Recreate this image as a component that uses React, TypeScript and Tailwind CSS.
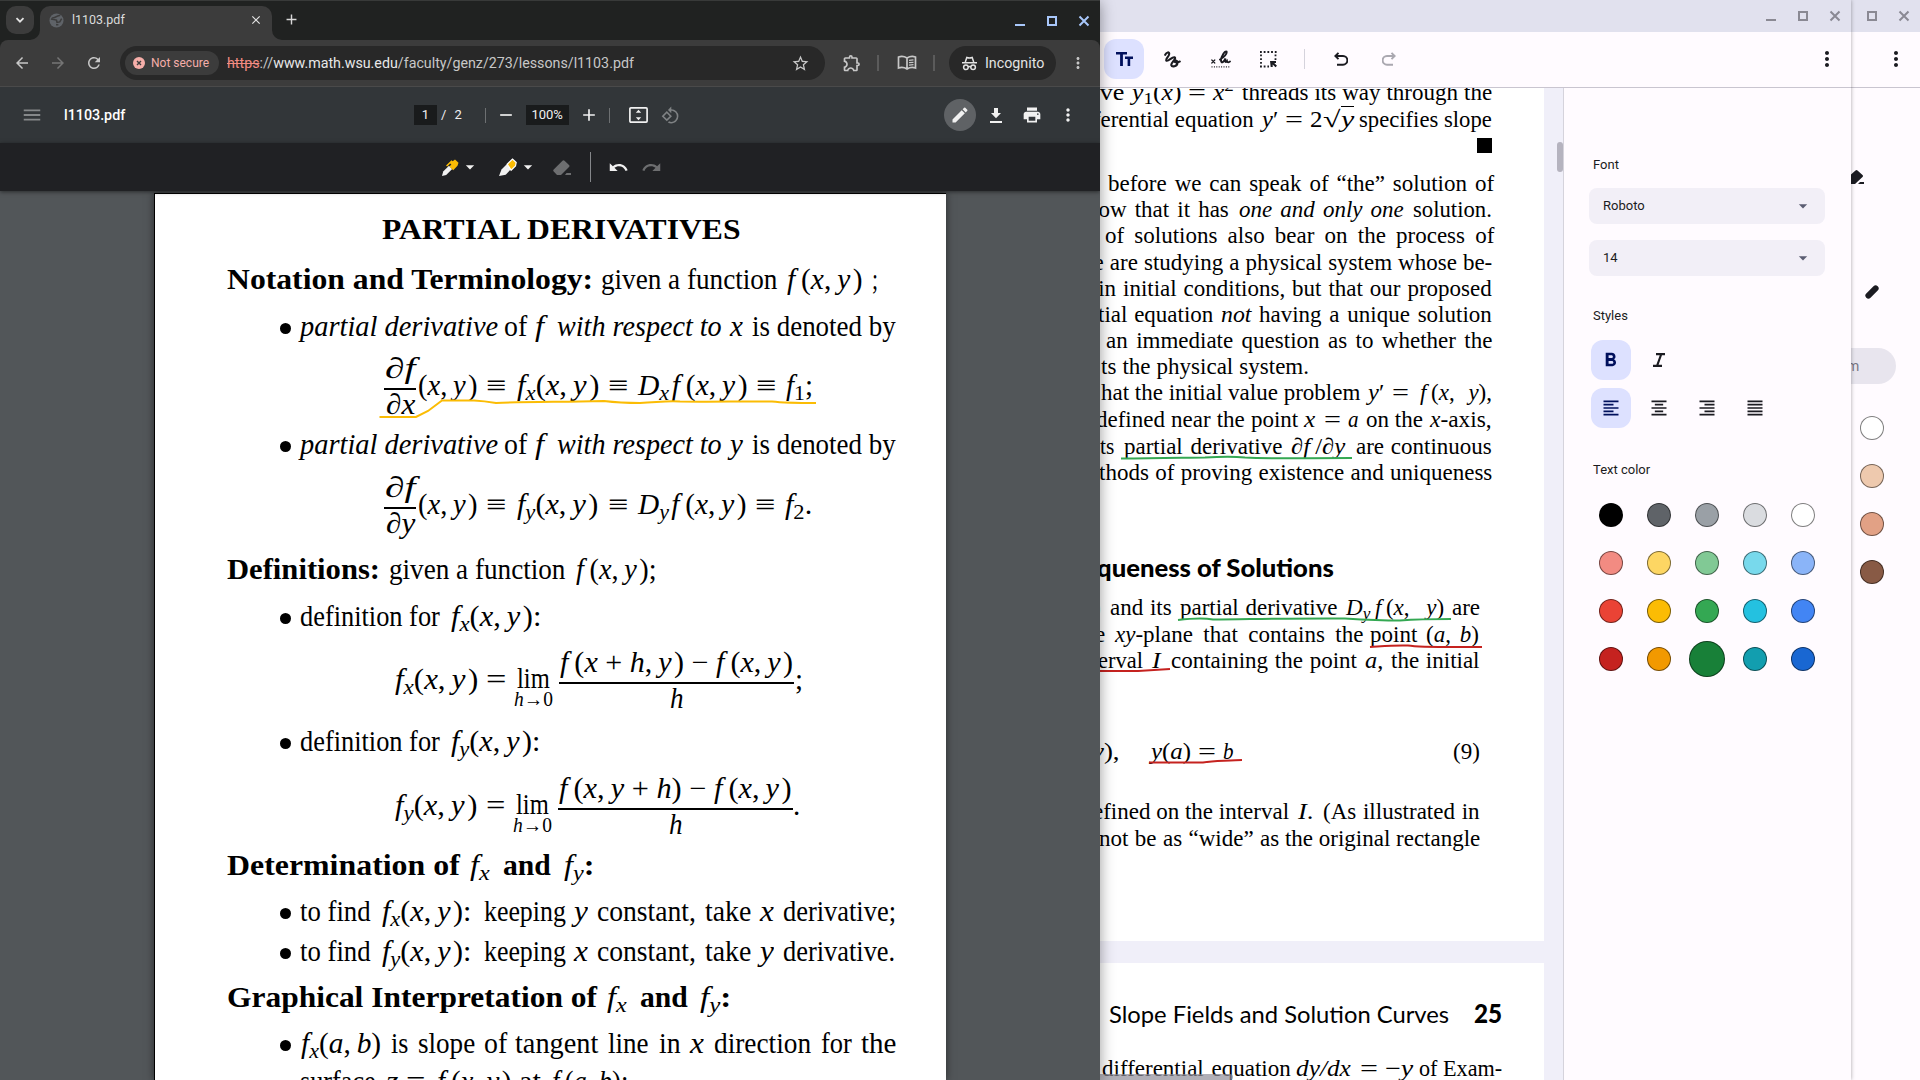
import { useLayoutEffect, useRef, useState, type ReactNode } from 'react';
import {
  MdArrowBack, MdArrowForward, MdRefresh, MdStarOutline, MdOutlineExtension, MdMoreVert, MdEdit, MdPrint,
  MdUndo, MdRedo, MdFormatAlignLeft, MdFormatAlignCenter, MdFormatAlignRight, MdFormatAlignJustify, MdFormatBold,
  MdArrowDropDown, MdAdd, MdRemove, MdClose, MdMenu, MdOutlineRotate90DegreesCcw,
} from 'react-icons/md';

/** Fits a run of text to a target width, either by stretching it or by widening its word spaces. */
function Fit({ w, gap = 0, justify = false, className = '', children }: {
  w: number; gap?: number; justify?: boolean; className?: string; children: ReactNode;
}) {
  const ref = useRef<HTMLSpanElement>(null);
  const [fit, setFit] = useState<{ transform?: string; wordSpacing?: string }>({});
  useLayoutEffect(() => {
    const el = ref.current;
    if (!el) return;
    const natural = el.offsetWidth;
    const spaces = (el.textContent ?? '').split(' ').length - 1;
    if (justify && spaces > 0 && natural < w) setFit({ wordSpacing: `${(w - natural) / spaces}px` });
    else if (natural > 0) setFit({ transform: `scaleX(${w / natural})` });
  }, [w, justify]);
  return (
    <span className={`block shrink-0 ${className}`} style={{ width: w, marginLeft: gap }}>
      <span ref={ref} className="inline-block origin-left whitespace-nowrap" style={fit}>{children}</span>
    </span>
  );
}

type Seg = [start: number, end: number, node: ReactNode, className?: string];

/** One typeset line: runs placed between start and end stops, measured from `from`. */
function Line({ h, segs, from, justify = false, className = '' }: {
  h: string; segs: Seg[]; from: number; justify?: boolean; className?: string;
}) {
  let pos = from;
  return (
    <div className={`flex items-end ${h} ${className}`}>
      {segs.map(([a, b, node, cls], i) => {
        const gap = a - pos;
        pos = b;
        return <Fit key={i} w={b - a} gap={gap} justify={justify} className={cls}>{node}</Fit>;
      })}
    </div>
  );
}

const Bullet = () => <span className="mb-[12px] ml-[125px] mr-[9px] block size-[11px] shrink-0 rounded-full bg-black" />;

function Item({ h, segs }: { h: string; segs: Seg[] }) {
  return (
    <div className={`flex items-end ${h}`}>
      <Bullet />
      <Line h="h-[40px]" segs={segs} from={300} />
    </div>
  );
}

function Frac({ w, gap, num, den, denW }: { w: number; gap: number; num: ReactNode; den: ReactNode; denW: number }) {
  return (
    <div className="-mb-[19px] flex shrink-0 flex-col items-center" style={{ width: w, marginLeft: gap }}>
      <Fit w={w - 2}>{num}</Fit>
      <div className="h-[1.5px] w-full bg-black" />
      <div className="-mt-[5.5px]"><Fit w={denW}>{den}</Fit></div>
    </div>
  );
}

function Lim({ gap }: { gap: number }) {
  return (
    <div className="-mb-[12px] flex w-[39px] shrink-0 flex-col items-center" style={{ marginLeft: gap }}>
      <Fit w={33}>lim</Fit>
      <div className="-mt-[11px] text-[20px] leading-[24px]"><Fit w={39}><i>h</i>→0</Fit></div>
    </div>
  );
}

const hair = '\u200a';
const thin = '\u2009';
const args = <>(<i>x</i>,{thin}<i>y</i>{hair})</>;
const fxy = <><i>f</i>{thin}{args}</>;
const fx = <><i>f</i><sub><i>x</i></sub></>;
const fy = <><i>f</i><sub><i>y</i></sub></>;
const fxOf = <>{fx}{args}</>;
const fyOf = <>{fy}{args}</>;

function LecturePage() {
  return (
    <div className="relative ml-[154px] h-[887px] w-[792px] overflow-hidden border-l border-t border-black bg-white font-['Liberation_Serif',serif] text-[29px] leading-[40px] text-black shadow-[0_0_8px_rgba(0,0,0,0.5)]">
      <Line from={155} h="h-[55px]" className="font-bold" segs={[[382, 741, 'PARTIAL DERIVATIVES']]} />
      <Line from={155} h="h-[50px]" segs={[[227, 593, <b>Notation and Terminology:</b>], [601, 777, 'given a function'], [787, 862, fxy], [872, 878, ';']]} />
      <Item h="h-[47px]" segs={[[300, 498, <i>partial derivative</i>], [504, 527, 'of'], [535, 544, <i>f</i>], [557, 722, <i>with respect to</i>], [730, 743, <i>x</i>], [752, 896, 'is denoted by']]} />
      <div className="flex h-[59px] items-end">
        <Frac gap={229} w={32} denW={29} num={<i>∂f</i>} den={<i>∂x</i>} />
        <Line from={416} h="h-[40px]" segs={[[418, 478, args], [486, 506, '≡'], [517, 599, fxOf], [608, 628, '≡'], [638, 747, <><i>D</i><sub><i>x</i></sub>{hair}{fxy}</>], [756, 776, '≡'], [786, 813, <><i>f</i><sub>1</sub>;</>]]} />
      </div>
      <Item h="h-[59px]" segs={[[300, 498, <i>partial derivative</i>], [504, 527, 'of'], [535, 544, <i>f</i>], [557, 722, <i>with respect to</i>], [730, 743, <i>y</i>], [752, 896, 'is denoted by']]} />
      <div className="flex h-[60px] items-end">
        <Frac gap={229} w={32} denW={29} num={<i>∂f</i>} den={<i>∂y</i>} />
        <Line from={416} h="h-[40px]" segs={[[418, 478, args], [486, 506, '≡'], [517, 598, fyOf], [608, 628, '≡'], [638, 746, <><i>D</i><sub><i>y</i></sub>{hair}{fxy}</>], [755, 775, '≡'], [785, 812, <><i>f</i><sub>2</sub>.</>]]} />
      </div>
      <Line from={155} h="h-[65px]" segs={[[227, 380, <b>Definitions:</b>], [389, 565, 'given a function'], [576, 657, <>{fxy};</>]]} />
      <Item h="h-[47px]" segs={[[300, 440, 'definition for'], [451, 541, <>{fxOf}:</>]]} />
      <div className="flex h-[63px] items-end">
        <Line from={155} h="h-[40px]" segs={[[395, 478, fxOf], [486, 506, '=']]} />
        <Lim gap={8} />
        <Frac gap={6} w={235} denW={14} num={<><i>f</i>{thin}(<i>x</i> + <i>h</i>,{thin}<i>y</i>{hair}) − <i>f</i>{thin}{args}</>} den={<i>h</i>} />
        <span className="ml-px">;</span>
      </div>
      <Item h="h-[62px]" segs={[[300, 440, 'definition for'], [451, 540, <>{fyOf}:</>]]} />
      <div className="flex h-[64px] items-end">
        <Line from={155} h="h-[40px]" segs={[[395, 477, fyOf], [486, 505, '=']]} />
        <Lim gap={8} />
        <Frac gap={6} w={235} denW={14} num={<><i>f</i>{thin}(<i>x</i>,{thin}<i>y</i> + <i>h</i>) − <i>f</i>{thin}{args}</>} den={<i>h</i>} />
        <span>.</span>
      </div>
      <Line from={155} h="h-[60px]" segs={[[227, 460, <b>Determination of</b>], [470, 490, fx], [503, 551, <b>and</b>], [564, 594, <>{fy}<b>:</b></>]]} />
      <Item h="h-[46px]" segs={[[300, 371, 'to find'], [382, 471, <>{fxOf}:</>], [484, 566, 'keeping'], [574, 588, <i>y</i>], [597, 696, 'constant,'], [705, 751, 'take'], [760, 774, <i>x</i>], [783, 896, 'derivative;']]} />
      <Item h="h-[40px]" segs={[[300, 371, 'to find'], [382, 471, <>{fyOf}:</>], [484, 566, 'keeping'], [574, 588, <i>x</i>], [597, 696, 'constant,'], [705, 751, 'take'], [760, 774, <i>y</i>], [783, 895, 'derivative.']]} />
      <Line from={155} h="h-[46px]" segs={[[227, 597, <b>Graphical Interpretation of</b>], [607, 627, fx], [640, 688, <b>and</b>], [700, 731, <>{fy}<b>:</b></>]]} />
      <Item h="h-[46px]" segs={[[301, 381, <>{fx}(<i>a</i>,{thin}<i>b</i>)</>], [391, 408, 'is'], [418, 475, 'slope'], [484, 507, 'of'], [515, 598, 'tangent'], [608, 649, 'line'], [659, 681, 'in'], [690, 704, <i>x</i>], [714, 811, 'direction'], [821, 852, 'for'], [861, 896, 'the']]} />
      <Line from={155} h="h-[38px]" segs={[[300, 376, 'surface'], [386, 398, <i>z</i>], [406, 425, '='], [437, 511, fxy], [519, 541, 'at'], [552, 628, <><i>f</i>{thin}(<i>a</i>,{thin}<i>b</i>):</>]]} />
      <svg className="absolute left-[221px] top-[201px] h-[24px] w-[444px]" fill="none" stroke="#fbbc04" strokeWidth="2" viewBox="376 395 444 24">
        <path d="M379.500 417H416L428 411L442 400.500H474Q484 401 496 403C520 402 545 402 580 401.500L604 401Q620 403 640 403C660 402 668 400.500 680 401.500C710 402 750 401 772 401.500Q785 403 816 403" />
      </svg>
    </div>
  );
}

const Kebab = ({ className = '' }: { className?: string }) => <MdMoreVert className={className} />;

function WindowButtons({ minimize = true, className = '' }: { minimize?: boolean; className?: string }) {
  return (
    <svg className={`h-[12px] w-[76px] ${className}`} viewBox="0 0 76 12" fill="none" stroke="currentColor" strokeWidth="2">
      {minimize && <path d="M1 10h10" />}
      <rect x="34" y="2" width="8" height="8" />
      <path d="M65.500 1.500l9 9M74.500 1.500l-9 9" />
    </svg>
  );
}

function BrowserWindow() {
  return (
    <div className="absolute left-0 top-0 z-20 flex h-[1080px] w-[1100px] flex-col overflow-hidden bg-[#525659] font-[Roboto,sans-serif] shadow-[0_2px_14px_rgba(0,0,0,0.4)]">
      <div className="flex h-[40px] shrink-0 items-start border-t border-[#383a39] bg-[#202221]">
        <button className="ml-[6px] mt-[5px] flex size-[28px] items-center justify-center rounded-[10px] bg-[#3c3c3c] text-[#e3e3e3]">
          <svg className="size-[10px]" viewBox="0 0 10 10" fill="none" stroke="currentColor" strokeWidth="1.8"><path d="M1.500 3.200L5 6.700l3.500-3.500" /></svg>
        </button>
        <svg className="-ml-[4px] mt-[29px] size-[10px] text-[#3c3c3c]" viewBox="0 0 10 10"><path d="M10 0v10H0A10 10 0 0 0 10 0z" fill="currentColor" /></svg>
        <div className="mt-[5px] flex h-[34px] w-[232px] items-center rounded-t-[10px] bg-[#3c3c3c] pb-[6px]">
          <svg className="ml-[9px] size-[15px]" viewBox="0 0 16 16">
            <circle cx="8" cy="8" r="7.500" fill="#5f6368" />
            <path d="M3 5.500Q6 5 8.500 3.500L12 2.500M2 6.500L8 7.500L8.500 10L11.500 9.500L13.500 6M7.500 12.500L10 12.500" stroke="#3c3c3c" strokeWidth="1.600" fill="none" />
          </svg>
          <div className="ml-[8px] text-[12px] text-[#dcdcdc]"><Fit w={53}>l1103.pdf</Fit></div>
          <MdClose className="ml-auto mr-[9px] size-[14px] text-[#e3e3e3]" />
        </div>
        <svg className="mt-[29px] size-[10px] text-[#3c3c3c]" viewBox="0 0 10 10"><path d="M0 0v10H10A10 10 0 0 1 0 0z" fill="currentColor" /></svg>
        <MdAdd className="ml-[1px] mt-[10px] size-[17px] text-[#d8d8d8]" />
        <WindowButtons className="ml-auto mr-[10px] mt-[14px] text-[#a8c7fa]" />
      </div>
      <div className="shrink-0 bg-[#202221]">
        <div className="flex h-[47px] items-center rounded-t-[8px] border-b border-[#4a4a4a] bg-[#3c3c3c] text-[#c7c7c7]">
          <MdArrowBack className="ml-[13px] size-[18px]" />
          <MdArrowForward className="ml-[18px] size-[18px] text-[#757575]" />
          <MdRefresh className="ml-[18px] size-[18px]" />
          <div className="ml-[17px] flex h-[34px] w-[705px] items-center rounded-full bg-[#282828]">
            <div className="ml-[5px] flex h-[24px] w-[94px] items-center rounded-full bg-[#3c3c3c] text-[12px] text-[#f6aea9]">
              <svg className="ml-[8px] size-[12px]" viewBox="0 0 12 12"><circle cx="6" cy="6" r="6" fill="#f6aea9" /><path d="M4 4l4 4M8 4l-4 4" stroke="#3c3c3c" strokeWidth="1.400" /></svg>
              <Fit w={58} gap={6}>Not secure</Fit>
            </div>
            <div className="text-[14px] text-[#c7c7c7]">
              <Fit w={407} gap={8}><span className="text-[#f28b82] line-through">https</span>://<span className="text-[#e8e8e8]">www.math.wsu.edu</span>/faculty/genz/273/lessons/l1103.pdf</Fit>
            </div>
            <MdStarOutline className="ml-auto mr-[15px] size-[19px]" />
          </div>
          <MdOutlineExtension className="ml-[17px] size-[20px]" />
          <div className="ml-[15px] h-[16px] w-[2px] bg-[#5b5b5b]" />
          <svg className="ml-[18px] h-[16px] w-[20px]" viewBox="0 0 20 16" fill="none" stroke="currentColor" strokeWidth="1.700">
            <path d="M10 3Q6 .5 1.500 2v11Q6 11.500 10 14Q14 11.500 18.500 13V2Q14 .5 10 3zM10 3v11" />
            <path d="M12 5.300l4.500-.4M12 7.700l4.500-.4M12 10.100l4.500-.4" strokeWidth="1.300" />
          </svg>
          <div className="ml-[16px] h-[16px] w-[2px] bg-[#5b5b5b]" />
          <div className="ml-[14px] flex h-[34px] w-[107px] items-center rounded-full bg-[#282828] text-[14px] text-[#e3e3e3]">
            <svg className="ml-[13px] h-[15px] w-[15px]" viewBox="0 0 15 15" fill="none" stroke="currentColor" strokeWidth="1.500">
              <path d="M3.300 6L4.800 1.500Q7.500 2.500 10.200 1.500L11.700 6M0 6.700h15" />
              <circle cx="3.900" cy="11.300" r="2.300" /><circle cx="11.100" cy="11.300" r="2.300" /><path d="M6 11q1.500-.8 3 0" />
            </svg>
            <Fit w={59} gap={8}>Incognito</Fit>
          </div>
          <Kebab className="ml-[13px] size-[18px]" />
        </div>
      </div>
      <div className="flex h-[56px] shrink-0 items-center bg-[#323639] text-[#f1f1f1]">
        <MdMenu className="ml-[21px] size-[22px] text-[#85888a]" />
        <div className="text-[15px] font-medium text-white"><Fit w={61} gap={21}>l1103.pdf</Fit></div>
        <div className="ml-[289px] flex h-[20px] w-[23px] items-center justify-center bg-[#191b1c] text-[13px]">1</div>
        <span className="ml-[4px] text-[13px]">/</span>
        <span className="ml-[8px] text-[13px]">2</span>
        <div className="ml-[23px] h-[15px] w-px bg-[#6d7072]" />
        <MdRemove className="ml-[10px] size-[20px]" />
        <div className="ml-[10px] flex h-[20px] w-[43px] items-center justify-center bg-[#191b1c] text-[13px]">100%</div>
        <MdAdd className="ml-[10px] size-[20px]" />
        <div className="ml-[10px] h-[15px] w-px bg-[#6d7072]" />
        <svg className="ml-[19px] h-[16px] w-[19px]" viewBox="0 0 19 16" fill="none" stroke="currentColor" strokeWidth="1.700">
          <rect x=".9" y=".9" width="17.200" height="14.200" rx="1" />
          <path d="M9.500 2.800l2.700 3h-5.400zM9.500 13.200l2.700-3h-5.400z" fill="currentColor" stroke="none" />
        </svg>
        <MdOutlineRotate90DegreesCcw className="ml-[13px] size-[19px] text-[#7f8284]" />
        <button className="ml-auto flex size-[32px] items-center justify-center rounded-full bg-[#5f6265]"><MdEdit className="size-[20px]" /></button>
        <svg className="ml-[14px] h-[15px] w-[12px]" viewBox="0 0 12 15"><path d="M4 0h4v5h3L6 10.200 1 5h3zM0 13h12v2H0z" fill="currentColor" /></svg>
        <MdPrint className="ml-[20px] size-[20px]" />
        <Kebab className="ml-[16px] mr-[22px] size-[20px]" />
      </div>
      <div className="z-10 flex h-[48px] shrink-0 items-center bg-[#202124] text-[#f1f1f1] shadow-[0_1px_4px_rgba(0,0,0,0.5)]">
        <svg className="ml-[442px] size-[17px]" viewBox="0 0 17 17">
          <path d="M0 17l1.200-4.500L7 6.700l3.200 3.200-6 6z" fill="currentColor" />
          <path d="M4 6.500L9.500 1.300l1.200 1L13 .5l3.500 3.200-1 3-4.300 4.500-3.800-3.700 2-2-1.200-1-3 3z" fill="#fbbc04" />
        </svg>
        <MdArrowDropDown className="ml-px size-[20px]" />
        <svg className="ml-[19px] size-[18px]" viewBox="0 0 18 18">
          <path d="M0 18l2.500-6.500L8 6l4.500 4.500-5.800 6.300z" fill="currentColor" />
          <path d="M8.200 6.200L13.500 1l3.700 3.500-.7 3.500-4.400 4.200z" fill="#fbbc04" stroke="#fff" strokeWidth="1.200" />
        </svg>
        <MdArrowDropDown className="ml-px size-[20px]" />
        <svg className="ml-[15px] h-[15px] w-[18px] text-[#6d6e70]" viewBox="0 0 18 15"><path d="M.7 9.500L9.500.7q1-1 2 0l4.500 4.300q1 1 0 2L8 15H4L.7 11.500q-1-1 0-2zM13.500 13H18v2h-6z" fill="currentColor" /></svg>
        <div className="ml-[19px] h-[30px] w-px bg-[#85878a]" />
        <MdUndo className="ml-[17px] size-[21px]" />
        <MdRedo className="ml-[12px] size-[21px] text-[#6d6e70]" />
      </div>
      <div className="h-[889px] pt-[2px]"><LecturePage /></div>
    </div>
  );
}

const xy = <>(<i>x</i>, <i>y</i>)</>;

function TextbookPages() {
  return (
    <div className="h-[992px] w-[444px] overflow-hidden bg-[#f0eff9]">
      <div className="relative h-[853px] overflow-hidden bg-white font-['Liberation_Serif',serif] text-[23px] leading-[30px] text-black">
        <Line justify from={1100} h="h-[20px]" segs={[[1091, 1124, 'rve'], [1132, 1181, <><i>y</i><sub>1</sub>(<i>x</i>)</>], [1188, 1206, '='], [1213, 1234, <><i>x</i><sup>2</sup></>], [1242, 1492, 'threads its way through the']]} />
        <Line justify from={1100} h="h-[27px]" segs={[[1093, 1254, 'ferential equation'], [1262, 1278, <><i>y</i>′</>], [1285, 1303, '='], [1310, 1323, '2'], [1323, 1341, '√'], [1341, 1354, <i className="border-t-[1.5px] border-black leading-none">y</i>], [1359, 1492, 'specifies slope']]} />
        <div className="flex h-[18px] items-end"><span className="ml-[377px] size-[15px] bg-black" /></div>
        <Line justify from={1100} h="h-[46px]" segs={[[1108, 1494, 'before we can speak of “the” solution of']]} />
        <Line justify from={1100} h="h-[26px]" segs={[[1087, 1229, 'now that it has'], [1239, 1404, <i>one and only one</i>], [1413, 1492, 'solution.']]} />
        <Line justify from={1100} h="h-[26px]" segs={[[1105, 1494, 'of solutions also bear on the process of']]} />
        <Line justify from={1100} h="h-[27px]" segs={[[1077, 1492, 'we are studying a physical system whose be-']]} />
        <Line justify from={1100} h="h-[26px]" segs={[[1088, 1492, 'ain initial conditions, but that our proposed']]} />
        <Line justify from={1100} h="h-[26px]" segs={[[1098, 1213, 'tial equation'], [1221, 1251, <i>not</i>], [1259, 1492, 'having a unique solution']]} />
        <Line justify from={1100} h="h-[26px]" segs={[[1106, 1492, 'an immediate question as to whether the']]} />
        <Line justify from={1100} h="h-[26px]" segs={[[1101, 1309, 'ts the physical system.']]} />
        <Line justify from={1100} h="h-[26px]" segs={[[1101, 1360, 'hat the initial value problem'], [1368, 1384, <><i>y</i>′</>], [1392, 1409, '='], [1420, 1492, <><i>f</i>{thin}{xy},</>]]} />
        <Line justify from={1100} h="h-[27px]" segs={[[1096, 1298, 'defined near the point'], [1304, 1315, <i>x</i>], [1324, 1341, '='], [1348, 1359, <i>a</i>], [1366, 1423, 'on the'], [1430, 1492, <><i>x</i>-axis,</>]]} />
        <Line justify from={1100} h="h-[27px]" segs={[[1100, 1114, 'ts'], [1124, 1282, 'partial derivative'], [1291, 1345, <>∂<i>f</i>{thin}/∂<i>y</i></>], [1356, 1492, 'are continuous']]} />
        <Line justify from={1100} h="h-[26px]" segs={[[1099, 1492, 'thods of proving existence and uniqueness']]} />
        <Line from={1100} h="h-[94px]" className="font-[Lato,sans-serif] text-[25px] font-black" segs={[[1097, 1334, 'queness of Solutions']]} />
        <Line justify from={1100} h="h-[41px]" segs={[[1093, 1101, ')'], [1110, 1172, 'and its'], [1180, 1337, 'partial derivative'], [1346, 1444, <><i>D</i><sub><i>y</i></sub>{thin}<i>f</i>{thin}{xy}</>], [1452, 1480, 'are']]} />
        <Line justify from={1100} h="h-[27px]" segs={[[1095, 1105, 'e'], [1115, 1363, <><i>xy</i>-plane that contains the</>], [1370, 1479, <>point (<i>a</i>, <i>b</i>)</>]]} />
        <Line justify from={1100} h="h-[26px]" segs={[[1098, 1143, 'erval'], [1152, 1161, <i>I</i>], [1171, 1357, 'containing the point'], [1365, 1383, <><i>a</i>,</>], [1391, 1480, 'the initial']]} />
        <Line justify from={1100} h="h-[91px]" segs={[[1092, 1120, <><i>y</i>),</>], [1151, 1191, <><i>y</i>(<i>a</i>)</>], [1198, 1216, '='], [1223, 1234, <i>b</i>], [1453, 1480, '(9)']]} />
        <Line justify from={1100} h="h-[60px]" segs={[[1093, 1289, 'efined on the interval'], [1298, 1313, <><i>I</i>.</>], [1323, 1480, '(As illustrated in']]} />
        <Line justify from={1100} h="h-[27px]" segs={[[1099, 1254, 'not be as “wide”'], [1260, 1480, 'as the original rectangle']]} />
        <svg className="absolute left-0 top-0 h-[853px] w-[444px]" viewBox="1100 88 444 853" fill="none" strokeWidth="2">
          <g stroke="#34a853">
            <path d="M1121 458.500C1160 458.500 1190 457.500 1205 457.500Q1230 456 1245 457.500C1270 459 1300 458 1352 458" />
            <path d="M1178 620C1195 618 1205 618 1213 619.500C1260 619 1310 618 1345 618.500C1370 620 1380 620.500 1400 620.500Q1420 619 1451 619" />
          </g>
          <g stroke="#c5221f">
            <path d="M1370 647C1385 646 1395 645 1408 645.500C1420 647.500 1440 647 1482 647" />
            <path d="M1100 671H1138Q1155 670 1170 669" />
            <path d="M1149 762.500H1203Q1210 761.500 1224 760.800T1242 760" />
          </g>
        </svg>
      </div>
      <div className="mt-[22px] h-[117px] overflow-hidden bg-white font-['Liberation_Serif',serif] text-[23px] leading-[30px] text-black">
        <Line from={1100} h="h-[66px]" className="font-[Lato,sans-serif]" segs={[[1109, 1449, 'Slope Fields and Solution Curves'], [1474, 1502, '25', 'mb-[1px] text-[26px] font-black']]} />
        <Line justify from={1100} h="h-[55px]" segs={[[1102, 1291, 'differential equation'], [1296, 1351, <i>dy/dx</i>], [1360, 1378, '='], [1385, 1413, <>−<i>y</i></>], [1419, 1502, 'of Exam-']]} />
      </div>
      <div className="relative -mt-[6px] h-[6px] w-[133px] rounded-r-[3px] bg-[#8f8d98]/70" />
    </div>
  );
}

const swatches = [
  'bg-[#000000]', 'bg-[#5f6368]', 'bg-[#9aa0a6]', 'bg-[#dadce0]', 'bg-[#ffffff]',
  'bg-[#f28b82]', 'bg-[#fdd663]', 'bg-[#81c995]', 'bg-[#78d9ec]', 'bg-[#8ab4f8]',
  'bg-[#ea4335]', 'bg-[#fbbc04]', 'bg-[#34a853]', 'bg-[#24c1e0]', 'bg-[#4285f4]',
  'bg-[#c5221f]', 'bg-[#f29900]', 'bg-[#188038]', 'bg-[#129eaf]', 'bg-[#1967d2]',
];

function Select({ value }: { value: string }) {
  return (
    <button className="flex h-[36px] w-[236px] items-center justify-between rounded-[8px] bg-[#f2eff7] pl-[14px] pr-[12px] text-left">
      <span className="text-[13px]">{value}</span>
      <MdArrowDropDown className="size-[20px] text-[#5b5d72]" />
    </button>
  );
}

function StylePanel() {
  const tool = 'flex size-[40px] items-center justify-center rounded-[12px]';
  return (
    <div className="flex h-[992px] flex-1 flex-col border-l border-[#d5d3dc] pl-[25px] text-[13px] leading-[20px] text-[#1b1b21]">
      <div className="mt-[67px] pl-[4px]">Font</div>
      <div className="mt-[13px] flex flex-col gap-[16px]"><Select value="Roboto" /><Select value="14" /></div>
      <div className="mt-[30px] pl-[4px]">Styles</div>
      <div className="ml-[2px] mt-[14px] flex gap-[8px]">
        <div className={`${tool} bg-[#dde1ff] text-[#00105c]`}><MdFormatBold className="mr-[1px] mt-[1px] size-[23px]" /></div>
        <div className={tool}><svg className="size-[14px]" viewBox="0 0 14 14" fill="none" stroke="currentColor" strokeWidth="2.200"><path d="M4 1.200h9M1 12.800h9M9.300 1L5 13" /></svg></div>
      </div>
      <div className="ml-[2px] mt-[8px] flex gap-[8px]">
        <div className={`${tool} bg-[#dde1ff] text-[#00105c]`}><MdFormatAlignLeft className="size-[20px]" /></div>
        <div className={tool}><MdFormatAlignCenter className="size-[20px]" /></div>
        <div className={tool}><MdFormatAlignRight className="size-[20px]" /></div>
        <div className={tool}><MdFormatAlignJustify className="size-[20px]" /></div>
      </div>
      <div className="mt-[32px] pl-[4px]">Text color</div>
      <div className="-ml-[2px] mt-[11px] grid w-[240px] auto-rows-[48px] grid-cols-5 items-center justify-items-center">
        {swatches.map((c, i) => (
          <span key={c} className={`rounded-full border border-black/50 ${c} ${i === 17 ? 'size-[36px]' : 'size-[24px]'}`} />
        ))}
      </div>
    </div>
  );
}

function GalleryWindow() {
  return (
    <div className="absolute left-[1100px] top-0 z-10 flex h-[1080px] w-[751px] flex-col bg-[#fffbff] font-[Roboto,sans-serif] text-[#1b1b21] shadow-[0_0_4px_rgba(0,0,0,0.35)]">
      <div className="flex h-[32px] shrink-0 items-center justify-end bg-[#e1e1ee] pr-[10px]"><WindowButtons className="text-[#8a8993]" /></div>
      <div className="flex h-[56px] shrink-0 items-center border-b border-[#c9c5d0] pb-px">
        <div className="ml-[4px] flex size-[40px] items-center justify-center rounded-[12px] bg-[#dde1ff] text-[#00105c]">
          <svg className="h-[14px] w-[17px]" viewBox="0 0 17 14"><path d="M0 0h11v2.600H6.900V14H4.100V2.600H0zM9 4.500h8v2.400h-2.800V14h-2.600V6.900H9z" fill="currentColor" /></svg>
        </div>
        <svg className="ml-[20px] size-[17px]" viewBox="0 0 17 17" fill="none" stroke="currentColor" strokeWidth="2.100" strokeLinecap="round" strokeLinejoin="round">
          <path d="M1.200 3.800C2.500 1 5.500 .6 5.200 3C5 5.500 1.500 8 2.300 9.500C3.800 11.500 8 5.500 10.500 6.300C13 7.500 7 11.500 7.200 14C8 16.500 13 15.500 13.500 12C13.800 9 10 8.800 10.300 10.500C11 11.700 13.500 11.500 15.800 10.500" />
        </svg>
        <svg className="ml-[30px] h-[18px] w-[20px]" viewBox="0 0 20 18" fill="none" stroke="currentColor" strokeWidth="1.900" strokeLinecap="round">
          <path d="M.8 10l3 3M3.800 10l-3 3" strokeWidth="1.200" />
          <path d="M9 9.500C13 7.500 16.500 3.500 15.500 1.500C14 .5 10.500 6 10 10C10 13.500 12.500 13 14.500 8.500C14 12 14.500 13 16 11C16.500 13 17.500 12.500 19 11.500" />
          <path d="M.5 16.800h19" strokeWidth="1.200" strokeDasharray="1 1.400" strokeLinecap="butt" />
        </svg>
        <svg className="ml-[29px] size-[17px]" viewBox="0 0 17 17" fill="none" stroke="currentColor" strokeWidth="1.800">
          <path d="M0 1h17M1 3.500V17M0 15.500h9M15.500 3.500V9" strokeDasharray="1.800 1.900" />
          <path d="M10 10h6v2h-1.800l2.800 2.800-1.500 1.500-2.800-2.800V16h-2z" fill="currentColor" stroke="none" />
        </svg>
        <div className="ml-[27px] h-[20px] w-px bg-[#d5d3dc]" />
        <svg className="ml-[29px] h-[14px] w-[14px]" viewBox="0 0 14 14" fill="none" stroke="currentColor" strokeWidth="1.900"><path d="M4.500.8L1.300 4l3.200 3.200M1.500 4H9a4.200 4.200 0 0 1 0 8.700H3" /></svg>
        <svg className="ml-[34px] h-[14px] w-[14px] text-[#aaa8b0]" viewBox="0 0 14 14" fill="none" stroke="currentColor" strokeWidth="1.900"><path d="M9.500.8L12.700 4 9.500 7.200M12.500 4H5a4.200 4.200 0 0 0 0 8.700h6" /></svg>
        <Kebab className="ml-auto mr-[12px] size-[24px]" />
      </div>
      <div className="flex h-[992px]">
        <TextbookPages />
        <div className="flex w-[19px] justify-end bg-[#f0eff9]"><div className="mt-[54px] h-[30px] w-[6px] rounded-full bg-[#b5b3bf]" /></div>
        <StylePanel />
      </div>
    </div>
  );
}

function BackWindow() {
  return (
    <div className="absolute left-[1800px] top-0 flex h-[1080px] w-[120px] flex-col bg-[#fffbff] font-[Roboto,sans-serif] text-[#1b1b21]">
      <div className="flex h-[32px] shrink-0 items-center justify-end bg-[#e1e1ee] pr-[10px]"><WindowButtons minimize={false} className="text-[#8a8993]" /></div>
      <div className="flex h-[56px] shrink-0 items-center justify-end border-b border-[#c9c5d0] pb-px pr-[12px]"><Kebab className="size-[24px]" /></div>
      <svg className="ml-[47px] mt-[82px] h-[14px] w-[17px]" viewBox="0 0 17 14"><path d="M0 8L8.500.6q1-1 2 0l5 4.400q1 1 0 2L8 14H2L0 11.500zM13 12h4v2h-6z" fill="currentColor" /></svg>
      <div className="flex flex-col items-center pl-[24px]">
        <svg className="mt-[101px] size-[14px]" viewBox="0 0 14 14"><path d="M3.400 10.600l7.200-7.200" stroke="currentColor" strokeWidth="6" strokeLinecap="round" /></svg>
      </div>
      <div className="mt-[49px] flex h-[36px] w-[96px] items-center rounded-r-full bg-[#e8e5ee] pl-[45px] text-[14px] text-[#777582]"><span className="ml-[2px]">m</span></div>
      <div className="ml-[60px] mt-[32px] flex flex-col gap-[24px]">
        {['bg-white', 'bg-[#eec9ae]', 'bg-[#e2a185]', 'bg-[#885a45]'].map((c) => (
          <span key={c} className={`size-[24px] rounded-full border border-black/50 ${c}`} />
        ))}
      </div>
    </div>
  );
}

export default function App() {
  return (
    <div className="relative h-[1080px] w-[1920px] overflow-hidden bg-[#fffbff]">
      <BackWindow />
      <GalleryWindow />
      <BrowserWindow />
    </div>
  );
}
